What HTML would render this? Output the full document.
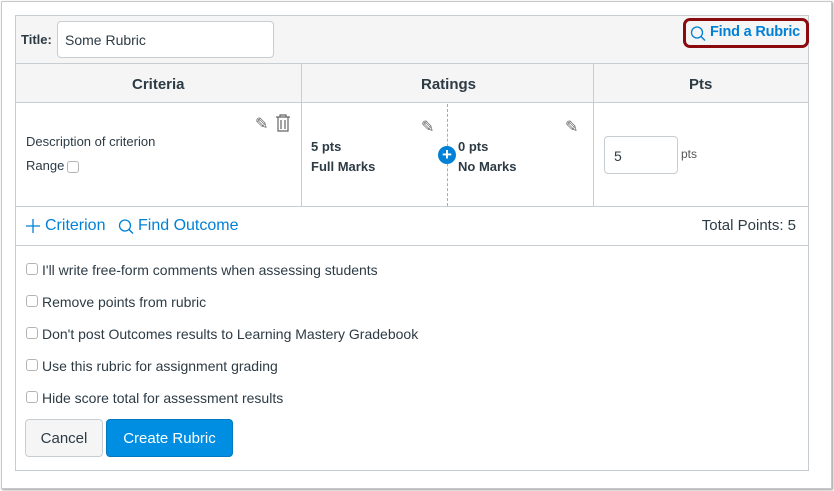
<!DOCTYPE html>
<html><head><style>
*{box-sizing:border-box;margin:0;padding:0}
body{width:834px;height:491px;background:#fff;font-family:"Liberation Sans",sans-serif;color:#2d3b45;position:relative;overflow:hidden}
.a{position:absolute}
.frame{left:1px;top:1px;width:831px;height:488px;border:1px solid #c8c8c8;box-shadow:1px 1px 2px #999}
.box{left:15px;top:15px;width:794px;height:456px;border:1px solid #c7cdd1}
.t{font-size:14px;white-space:nowrap}
.b{font-weight:bold}
.blue{color:#0081d6}
.cb{width:12px;height:12px;border:1px solid #b4b4b4;border-radius:3px;background:#fff}
</style></head><body>
<div class="a frame"></div>
<div class="a box"></div>
<div class="a" style="left:16px;top:16px;width:792px;height:48px;background:#f5f5f5;border-bottom:1px solid #c7cdd1"></div>
<div class="a t b" style="left:21px;top:32px;font-size:13px">Title:</div>
<div class="a" style="left:57px;top:21px;width:217px;height:37px;background:#fff;border:1px solid #c7cdd1;border-radius:4px"></div>
<div class="a t" style="left:65px;top:32px">Some Rubric</div>
<div class="a" style="left:683px;top:18px;width:126px;height:30px;border:3px solid #8b0a0f;border-radius:7px;background:#f5f5f5"></div>
<svg class="a" style="left:689px;top:25px" width="18" height="18" viewBox="0 0 18 18"><circle cx="8" cy="7.5" r="5.5" fill="none" stroke="#0081d6" stroke-width="1.3"/><path d="M12 11.5l4 4" stroke="#0081d6" stroke-width="1.4"/></svg>
<div class="a t b blue" style="left:710px;top:24px;font-size:14.5px;letter-spacing:-0.2px">Find a Rubric</div>
<div class="a" style="left:16px;top:64px;width:792px;height:39px;background:#f5f5f5;border-bottom:1px solid #c7cdd1"></div>
<div class="a" style="left:301px;top:64px;width:1px;height:142px;background:#c7cdd1"></div>
<div class="a" style="left:593px;top:64px;width:1px;height:142px;background:#c7cdd1"></div>
<div class="a t b" style="left:132px;top:76px;font-size:15px">Criteria</div>
<div class="a t b" style="left:421px;top:76px;font-size:15px">Ratings</div>
<div class="a t b" style="left:689px;top:76px;font-size:15px">Pts</div>
<div class="a t" style="left:26px;top:134px;font-size:13px">Description of criterion</div>
<div class="a t" style="left:26px;top:158px;font-size:13px">Range</div>
<div class="a cb" style="left:67px;top:161px"></div>
<div class="a" style="left:255px;top:114px;font-size:16px;color:#666">✎</div>
<svg class="a" style="left:275px;top:114px" width="16" height="18" viewBox="0 0 16 18"><path d="M1 3h14M5 3V1h6v2M3 3v14h10V3M6 6v9M10 6v9" fill="none" stroke="#666" stroke-width="1.2"/></svg>
<div class="a t b" style="left:311px;top:139px;font-size:13px">5 pts</div>
<div class="a t b" style="left:311px;top:159px;font-size:13px">Full Marks</div>
<div class="a" style="left:421px;top:117px;font-size:16px;color:#666">✎</div>
<div class="a" style="left:447px;top:104px;height:102px;border-left:1px dashed #aaa"></div>
<div class="a" style="left:438px;top:146px;width:18px;height:18px;border-radius:50%;background:#0081d6;color:#fff;font-weight:bold;font-size:17px;line-height:18px;text-align:center">+</div>
<div class="a t b" style="left:458px;top:139px;font-size:13px">0 pts</div>
<div class="a t b" style="left:458px;top:159px;font-size:13px">No Marks</div>
<div class="a" style="left:565px;top:117px;font-size:16px;color:#666">✎</div>
<div class="a" style="left:604px;top:136px;width:74px;height:38px;border:1px solid #c7cdd1;border-radius:4px"></div>
<div class="a t" style="left:614px;top:148px">5</div>
<div class="a t" style="left:681px;top:147px;font-size:12px;color:#555">pts</div>
<div class="a" style="left:16px;top:206px;width:792px;height:1px;background:#c7cdd1"></div>
<svg class="a" style="left:25px;top:218px" width="16" height="16" viewBox="0 0 16 16"><path d="M8 1v14M1 8h14" stroke="#0081d6" stroke-width="1.3"/></svg>
<div class="a t blue" style="left:45px;top:217px;font-size:16px">Criterion</div>
<svg class="a" style="left:117px;top:218px" width="18" height="18" viewBox="0 0 18 18"><circle cx="8" cy="7.5" r="5.5" fill="none" stroke="#0081d6" stroke-width="1.3"/><path d="M12 11.5l4 4" stroke="#0081d6" stroke-width="1.4"/></svg>
<div class="a t blue" style="left:138px;top:217px;font-size:16px">Find Outcome</div>
<div class="a t" style="left:698px;top:217px;font-size:15px;width:98px;text-align:right">Total Points: 5</div>
<div class="a" style="left:16px;top:245px;width:792px;height:1px;background:#c7cdd1"></div>
<div class="a cb" style="left:26px;top:263px"></div><div class="a t" style="left:42px;top:262px">I'll write free-form comments when assessing students</div>
<div class="a cb" style="left:26px;top:295px"></div><div class="a t" style="left:42px;top:294px">Remove points from rubric</div>
<div class="a cb" style="left:26px;top:327px"></div><div class="a t" style="left:42px;top:326px">Don't post Outcomes results to Learning Mastery Gradebook</div>
<div class="a cb" style="left:26px;top:359px"></div><div class="a t" style="left:42px;top:358px">Use this rubric for assignment grading</div>
<div class="a cb" style="left:26px;top:391px"></div><div class="a t" style="left:42px;top:390px">Hide score total for assessment results</div>
<div class="a" style="left:25px;top:419px;width:78px;height:38px;background:#f5f5f5;border:1px solid #c7cdd1;border-radius:4px;font-size:15px;line-height:37px;text-align:center">Cancel</div>
<div class="a" style="left:106px;top:419px;width:127px;height:38px;background:#008ee2;border:1px solid #0079c1;border-radius:4px;font-size:15px;line-height:37px;text-align:center;color:#fff">Create Rubric</div>
</body></html>
